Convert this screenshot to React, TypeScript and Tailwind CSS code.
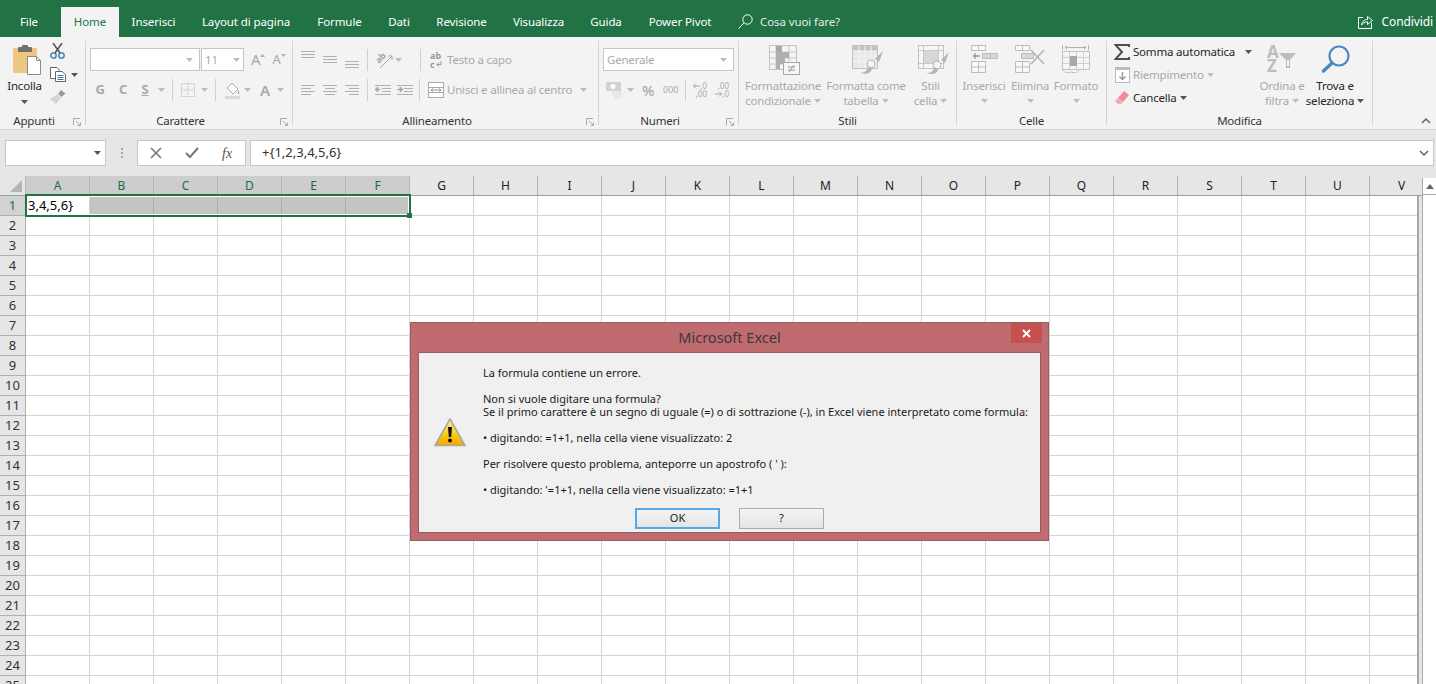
const COLS = "ABCDEFGHIJKLMNOPQRSTUV".split("");
const ROWS = Array.from({ length: 25 }, (_, i) => i + 1);
const TABS = [
  { label: "Inserisci", w: "w-[69px]" },
  { label: "Layout di pagina", w: "w-[116px]" },
  { label: "Formule", w: "w-[71px]" },
  { label: "Dati", w: "w-[48px]" },
  { label: "Revisione", w: "w-[77px]" },
  { label: "Visualizza", w: "w-[77px]" },
  { label: "Guida", w: "w-[58px]" },
  { label: "Power Pivot", w: "w-[90px]" },
];

function Caret({ dark = false, className = "" }: { dark?: boolean; className?: string }) {
  return (
    <svg width="7" height="4" viewBox="0 0 7 4" className={`shrink-0 ${className}`}>
      <polygon points="0,0 7,0 3.5,4" fill={dark ? "#555" : "#bdbdbd"} />
    </svg>
  );
}

function Launcher() {
  return (
    <svg width="8" height="8" viewBox="0 0 8 8" className="absolute right-[4px] top-[5px]">
      <path d="M0.5 7V0.5H7" fill="none" stroke="#a8a8a8" />
      <path d="M3 3L7 7M4.5 7.5H7.5V4.5" fill="none" stroke="#a8a8a8" />
    </svg>
  );
}

function Group({
  w,
  label,
  launcher = false,
  children,
}: {
  w: string;
  label: string;
  launcher?: boolean;
  children: React.ReactNode;
}) {
  return (
    <section className={`${w} shrink-0 flex flex-col h-full`}>
      <div className="h-[76px]">{children}</div>
      <div className={`relative h-[16px] leading-[16px] text-center text-[#333] ${launcher ? "pr-[17px]" : ""}`}>
        {label}
        {launcher && <Launcher />}
      </div>
    </section>
  );
}

function RibbonSep() {
  return <div className="w-px h-[84px] mt-[4px] shrink-0 bg-[#d4d4d4]" />;
}

function RowSep({ className = "" }: { className?: string }) {
  return <div className={`w-px h-[22px] shrink-0 bg-[#d0d0d0] ${className}`} />;
}

function Lines({ ys, xs }: { ys: number[]; xs: [number, number][] }) {
  return (
    <>
      {ys.map((y, i) => (
        <line key={y} x1={xs[i][0]} x2={xs[i][1]} y1={y + 0.5} y2={y + 0.5} stroke="#b0b0b0" />
      ))}
    </>
  );
}

function AlignV({ ys, className = "" }: { ys: number[]; className?: string }) {
  return (
    <svg width="14" height="21" className={`shrink-0 ${className}`}>
      <Lines ys={ys} xs={[[0, 14], [0, 14], [0, 14]]} />
    </svg>
  );
}

function AlignH({ xs, className = "" }: { xs: [number, number][]; className?: string }) {
  return (
    <svg width="14" height="22" className={`shrink-0 ${className}`}>
      <Lines ys={[6, 9, 12, 15]} xs={xs} />
    </svg>
  );
}

function Indent({ flip = false, className = "" }: { flip?: boolean; className?: string }) {
  return (
    <svg width="16" height="22" className={`shrink-0 ${className}`}>
      <Lines ys={[6, 9, 12, 15]} xs={[[0, 16], [7, 16], [7, 16], [0, 16]]} />
      {flip ? (
        <path d="M0 10.5H4M3 8L6 10.5L3 13Z" stroke="#a8a8a8" fill="#a8a8a8" />
      ) : (
        <path d="M2 10.5H6M3 8L0 10.5L3 13Z" stroke="#a8a8a8" fill="#a8a8a8" />
      )}
    </svg>
  );
}

function PasteIcon() {
  return (
    <svg width="28" height="30" viewBox="0 0 28 30" className="block ml-[13px]">
      <rect x="0" y="3" width="24" height="25" rx="1.5" fill="#efc67f" />
      <rect x="5" y="2" width="14" height="5" rx="1" fill="#6f6f6f" />
      <rect x="9" y="0" width="6" height="4" rx="1" fill="#6f6f6f" />
      <path d="M14.5 11.5H23.5L27.5 15.5V29.5H14.5Z" fill="#fff" stroke="#8a8a8a" />
      <path d="M23.5 11.5V15.5H27.5" fill="none" stroke="#8a8a8a" />
    </svg>
  );
}

function ScissorsIcon() {
  return (
    <svg width="15" height="16" viewBox="0 0 15 16" className="block">
      <path d="M3 0L10 10M12 0L5 10" stroke="#555" strokeWidth="1.6" />
      <circle cx="3.5" cy="12.5" r="2.7" fill="none" stroke="#2f75b5" strokeWidth="1.3" />
      <circle cx="11.5" cy="12.5" r="2.7" fill="none" stroke="#2f75b5" strokeWidth="1.3" />
    </svg>
  );
}

function CopyIcon() {
  return (
    <svg width="16" height="15" viewBox="0 0 16 15" className="block">
      <path d="M0.5 0.5H7L9 2.5V11.5H0.5Z" fill="#fff" stroke="#666" />
      <path d="M5.5 4.5H12L15.5 7.5V14.5H5.5Z" fill="#fff" stroke="#666" />
      <path d="M7.5 8.5H13.5M7.5 10.5H13.5M7.5 12.5H13.5" stroke="#2f75b5" />
    </svg>
  );
}

function BrushIcon() {
  return (
    <svg width="16" height="15" viewBox="0 0 16 15" className="block">
      <path d="M11 0L15.5 3.5L11.5 7L8 4Z" fill="#9a9a9a" />
      <path d="M7 4.5L11 8L6 14L0 9Z" fill="#d4d4d4" />
    </svg>
  );
}

function BorderIcon() {
  return (
    <svg width="14" height="14" className="shrink-0 ml-[8px]">
      <rect x="0.5" y="0.5" width="13" height="13" fill="none" stroke="#b5b5b5" strokeDasharray="1 1" />
      <path d="M7 1V13M1 7H13" stroke="#b5b5b5" strokeDasharray="1 1" />
    </svg>
  );
}

function FillIcon() {
  return (
    <svg width="16" height="17" className="shrink-0 ml-[9px]">
      <path d="M7 1L13 7L8 12L2 6Z" fill="#fff" stroke="#a5a5a5" />
      <path d="M13 8C14 10 15 11 14 12C13 12 12.5 10 13 8Z" fill="#a5a5a5" />
      <rect x="0" y="14" width="15" height="3" fill="#d9d9d9" />
    </svg>
  );
}

function OrientationIcon() {
  return (
    <svg width="18" height="18" className="shrink-0 ml-[7px] overflow-visible">
      <path d="M5 17L17 5M17 5H13M17 5V9" fill="none" stroke="#a8a8a8" />
      <text x="1" y="10" fontSize="9" fontWeight="700" fill="#a8a8a8" transform="rotate(-45 6 8)">
        ab
      </text>
    </svg>
  );
}

function MergeIcon() {
  return (
    <svg width="16" height="16" className="shrink-0 ml-[8px]">
      <rect x="0.5" y="0.5" width="15" height="15" fill="#fff" stroke="#b0a8ac" />
      <path d="M1 5.5H15M1 10.5H15" stroke="#b0a8ac" />
      <path d="M3 8H13M3 8L5 6.5M3 8L5 9.5M13 8L11 6.5M13 8L11 9.5" stroke="#999" fill="none" />
    </svg>
  );
}

function MoneyIcon() {
  return (
    <svg width="17" height="17" className="shrink-0 ml-[7px]">
      <rect x="0" y="0" width="15" height="9" fill="#d2d2d2" />
      <circle cx="7" cy="4.5" r="2.5" fill="#fff" />
      <path d="M6 10H16M6 12H16M7 14H15M8 16H14" stroke="#dcdcdc" />
    </svg>
  );
}

function DecimalIcon({ top, bottom, right = false, className = "" }: { top: string; bottom: string; right?: boolean; className?: string }) {
  return (
    <div className={`relative w-[14px] h-[16px] shrink-0 text-[8px] leading-[8px] tracking-normal text-[#a9a9a9] text-right ${className}`}>
      <div>{top}</div>
      <div>{bottom}</div>
      <svg width="7" height="6" className={`absolute left-0 ${right ? "top-[9px]" : "top-[1px]"}`}>
        <path d="M0 3H7M3 0.5L0.5 3L3 5.5" fill="none" stroke="#a9a9a9" transform={right ? "matrix(-1 0 0 1 7 0)" : undefined} />
      </svg>
    </div>
  );
}

function CondFormatIcon() {
  return (
    <svg width="32" height="30" viewBox="0 0 32 30" className="ml-[3px]">
      <rect x="0.5" y="0.5" width="27" height="24" fill="#f7f2f6" stroke="#c2c2c2" />
      <path d="M7 1V24M20 1V24M1 7H27M1 13H27M1 19H27" stroke="#c8c8c8" />
      <rect x="7" y="1" width="6" height="6" fill="#a8a8a8" />
      <rect x="7" y="7" width="13" height="6" fill="#b0b0b0" />
      <rect x="7" y="13" width="9" height="6" fill="#b0b0b0" />
      <rect x="7" y="19" width="4" height="5" fill="#b0b0b0" />
      <rect x="14.5" y="17.5" width="16" height="12" fill="#f6f6f6" stroke="#a8a8a8" />
      <path d="M19 22H26M19 25H26M25 20L20 27" stroke="#999" fill="none" />
    </svg>
  );
}

function TableStyleIcon() {
  return (
    <svg width="32" height="30" viewBox="0 0 32 30" className="ml-[4px]">
      <rect x="0.5" y="0.5" width="25" height="23" fill="#e8e8e8" stroke="#c2c2c2" />
      <rect x="1" y="1" width="24" height="5" fill="#c4c4c4" />
      <path d="M7 1V23M13 1V23M19 1V23M1 6H25M1 11H25M1 16H25" stroke="#f5f5f5" />
      <path d="M31 6L27 17L23 14Z" fill="#b5b5b5" />
      <circle cx="19" cy="19" r="4" fill="#f3f3f3" stroke="#b5b5b5" />
      <path d="M16 21C16 25 13 28 8 28C14 30 20 28 20 23Z" fill="#b5b5b5" />
    </svg>
  );
}

function CellStyleIcon() {
  return (
    <svg width="32" height="30" viewBox="0 0 32 30" className="ml-[6px]">
      <rect x="0.5" y="0.5" width="25" height="23" fill="#f6f6f6" stroke="#c2c2c2" />
      <path d="M1 5.5H25M5.5 1V23M20.5 1V23M1 18.5H25" stroke="#c8c8c8" />
      <rect x="6" y="6" width="14" height="12" fill="#d9d5d9" />
      <path d="M31 7L27 18L23 15Z" fill="#b5b5b5" />
      <circle cx="19" cy="20" r="4" fill="#f3f3f3" stroke="#b5b5b5" />
      <path d="M16 22C16 26 13 28 8 28C14 30 20 29 20 24Z" fill="#b5b5b5" />
    </svg>
  );
}

function InsertCellsIcon() {
  return (
    <svg width="27" height="28" viewBox="0 0 27 28">
      <path d="M0.5 0.5H14.5V5.5H0.5ZM7.5 1V5M0.5 16.5H14.5V27.5H0.5ZM0.5 22H14.5M7.5 17V27" fill="#f8f8f8" stroke="#bcbcbc" />
      <rect x="11.5" y="8.5" width="15" height="5" fill="#d9d5d9" stroke="#bcbcbc" />
      <path d="M19 9V13" stroke="#bcbcbc" />
      <path d="M9 11H3M5 8.5L2.5 11L5 13.5" fill="none" stroke="#9c9c9c" strokeWidth="1.3" />
    </svg>
  );
}

function DeleteCellsIcon() {
  return (
    <svg width="30" height="28" viewBox="0 0 30 28">
      <path d="M0.5 0.5H14.5V5.5H0.5ZM7.5 1V5M0.5 16.5H14.5V27.5H0.5ZM0.5 22H14.5M7.5 17V27" fill="#f8f8f8" stroke="#bcbcbc" />
      <rect x="6.5" y="8.5" width="12" height="5" fill="#d9d5d9" stroke="#bcbcbc" />
      <path d="M16 5L29 19M29 5L16 19" stroke="#b4b4b4" strokeWidth="1.6" />
    </svg>
  );
}

function FormatCellsIcon() {
  return (
    <svg width="28" height="29" viewBox="0 0 28 29">
      <path d="M0.5 0V5M26.5 0V5M3 2.5H24M3 2.5L5 1M3 2.5L5 4M24 2.5L22 1M24 2.5L22 4" fill="none" stroke="#b0b0b0" />
      <rect x="0.5" y="6.5" width="27" height="18" fill="#f8f4f7" stroke="#c2c2c2" />
      <path d="M7.5 7V24M14.5 7V24M21.5 7V24M1 12.5H27M1 18.5H27" stroke="#d0d0d0" />
      <rect x="8" y="11" width="7" height="10" fill="#a8a8a8" />
      <path d="M1 25C2 28 7 28 9 27C11 28 16 28 17 25" fill="none" stroke="#bcbcbc" />
    </svg>
  );
}

function SortFilterIcon() {
  return (
    <svg width="30" height="27" viewBox="0 0 30 27" className="overflow-visible">
      <text x="0" y="13" fontSize="17" fontWeight="700" fill="#bdbdbd" fontFamily="Noto Sans">A</text>
      <text x="0" y="27" fontSize="17" fontWeight="700" fill="#bdbdbd" fontFamily="Noto Sans">Z</text>
      <path d="M12 8H29L23 15V23H19V15Z" fill="#bdbdbd" />
      <path d="M20 15H22V21H20Z" fill="#f3f3f3" />
    </svg>
  );
}

function MagnifierIcon() {
  return (
    <svg width="29" height="28" viewBox="0 0 29 28">
      <circle cx="18" cy="11" r="9.5" fill="none" stroke="#4a86c0" strokeWidth="2.2" />
      <path d="M11 18L2.5 26" stroke="#4a86c0" strokeWidth="3.4" strokeLinecap="round" />
    </svg>
  );
}

function LargeButton({
  w,
  icon,
  line1,
  line2,
  enabled = false,
}: {
  w: string;
  icon: React.ReactNode;
  line1: string;
  line2?: string;
  enabled?: boolean;
}) {
  return (
    <div className={`${w} shrink-0 flex flex-col items-center whitespace-nowrap leading-[15px] ${enabled ? "text-[#262626]" : "text-[#a9a9a9]"}`}>
      <div className="h-[41px] pt-[8px]">{icon}</div>
      <div>{line1}</div>
      <div className="flex items-center gap-[3px] h-[15px]">
        {line2}
        <Caret dark={enabled} />
      </div>
    </div>
  );
}

function Ribbon() {
  return (
    <div className="flex h-[93px] bg-[#f3f3f3] border-b border-[#d2d2d2] text-[11.5px] tracking-[-0.2px]">
      <Group w="w-[85px]" label="Appunti" launcher>
        <div className="flex">
          <div className="w-[49px] pt-[8px]">
            <PasteIcon />
            <div className="mt-[3px] text-center text-[#262626] leading-[16px]">Incolla</div>
            <Caret dark className="block mx-auto mt-[6px]" />
          </div>
          <div className="pt-[6px] ml-[1px]">
            <ScissorsIcon />
            <div className="flex items-center mt-[8px]">
              <CopyIcon />
              <Caret dark className="ml-[5px]" />
            </div>
            <div className="mt-[8px]">
              <BrushIcon />
            </div>
          </div>
        </div>
      </Group>
      <RibbonSep />

      <Group w="w-[206px]" label="Carattere" launcher>
        <div className="pt-[11px]">
          <div className="flex items-center h-[23px] ml-[4px]">
            <div className="w-[110px] h-full flex items-center justify-end pr-[6px] bg-white border border-[#c6c6c6]">
              <Caret />
            </div>
            <div className="w-[43px] ml-[1px] h-full flex items-center justify-between px-[3px] bg-white border border-[#c6c6c6] text-[#a9a9a9]">
              11
              <Caret />
            </div>
            <span className="ml-[7px] text-[15px] text-[#a9a9a9]">A</span>
            <svg width="5" height="3" className="mb-[8px]"><polygon points="0,3 5,3 2.5,0" fill="#b0b0b0" /></svg>
            <span className="ml-[7px] text-[13px] text-[#a9a9a9]">A</span>
            <svg width="5" height="3" className="mb-[8px]"><polygon points="0,0 5,0 2.5,3" fill="#b0b0b0" /></svg>
          </div>
          <div className="flex items-center h-[22px] mt-[8px] text-[#a9a9a9] font-bold text-[13px]">
            <span className="w-[22px] ml-[3px] text-center">G</span>
            <span className="w-[22px] ml-[1px] text-center">C</span>
            <span className="w-[22px] text-center underline">S</span>
            <Caret className="ml-[2px]" />
            <RowSep className="ml-[7px]" />
            <BorderIcon />
            <Caret className="ml-[6px]" />
            <RowSep className="ml-[7px]" />
            <FillIcon />
            <Caret className="ml-[3px]" />
            <span className="ml-[9px] w-[10px] text-[15px] font-semibold">A</span>
            <Caret className="ml-[7px]" />
          </div>
        </div>
      </Group>
      <RibbonSep />

      <Group w="w-[305px]" label="Allineamento" launcher>
        <div className="pt-[12px] text-[#a9a9a9]">
          <div className="flex items-center h-[21px] ml-[8px]">
            <AlignV ys={[2, 5, 8]} />
            <AlignV ys={[7, 10, 13]} className="ml-[8px]" />
            <AlignV ys={[12, 15, 18]} className="ml-[8px]" />
            <RowSep className="ml-[8px]" />
            <OrientationIcon />
            <Caret className="ml-[2px]" />
            <RowSep className="ml-[18px]" />
            <div className="ml-[9px] w-[13px] text-[9px] leading-[9px] tracking-normal font-bold text-[#999]">
              <div>ab</div>
              <div className="flex items-center gap-[1px]">
                c
                <svg width="6" height="6">
                  <path d="M5 0V3.5H1M3 1.5L1 3.5L3 5.5" fill="none" stroke="#999" />
                </svg>
              </div>
            </div>
            <span className="ml-[4px]">Testo a capo</span>
          </div>
          <div className="flex items-center h-[22px] mt-[9px] ml-[8px]">
            <AlignH xs={[[0, 14], [0, 10], [0, 14], [0, 10]]} />
            <AlignH xs={[[0, 14], [2, 12], [0, 14], [2, 12]]} className="ml-[8px]" />
            <AlignH xs={[[0, 14], [4, 14], [0, 14], [4, 14]]} className="ml-[8px]" />
            <RowSep className="ml-[8px]" />
            <Indent className="ml-[7px]" />
            <Indent flip className="ml-[6px]" />
            <RowSep className="ml-[6px]" />
            <MergeIcon />
            <span className="ml-[3px] whitespace-nowrap">Unisci e allinea al centro</span>
            <Caret className="ml-[8px]" />
          </div>
        </div>
      </Group>
      <RibbonSep />

      <Group w="w-[139px]" label="Numeri" launcher>
        <div className="pt-[11px] text-[#a9a9a9]">
          <div className="ml-[4px] w-[131px] h-[23px] flex items-center justify-between pl-[3px] pr-[6px] bg-white border border-[#c6c6c6]">
            Generale
            <Caret />
          </div>
          <div className="flex items-center h-[22px] mt-[8px]">
            <MoneyIcon />
            <Caret className="ml-[4px]" />
            <span className="ml-[8px] w-[13px] text-[15px] text-[#a0a0a0]">%</span>
            <span className="ml-[8px] w-[14px] text-[9px] tracking-normal">000</span>
            <RowSep className="ml-[8px]" />
            <DecimalIcon top=",0" bottom=",00" className="ml-[7px]" />
            <DecimalIcon top=",00" bottom=",0" right className="ml-[8px]" />
          </div>
        </div>
      </Group>
      <RibbonSep />

      <Group w="w-[217px]" label="Stili">
        <div className="flex">
          <LargeButton w="w-[88px]" icon={<CondFormatIcon />} line1="Formattazione" line2="condizionale" />
          <LargeButton w="w-[78px]" icon={<TableStyleIcon />} line1="Formatta come" line2="tabella" />
          <LargeButton w="w-[51px]" icon={<CellStyleIcon />} line1="Stili" line2="cella" />
        </div>
      </Group>
      <RibbonSep />

      <Group w="w-[149px]" label="Celle">
        <div className="flex">
          <LargeButton w="w-[54px]" icon={<InsertCellsIcon />} line1="Inserisci" />
          <LargeButton w="w-[38px]" icon={<DeleteCellsIcon />} line1="Elimina" />
          <LargeButton w="w-[54px]" icon={<FormatCellsIcon />} line1="Formato" />
        </div>
      </Group>
      <RibbonSep />

      <Group w="w-[265px]" label="Modifica">
        <div className="flex">
          <div className="w-[148px] pt-[3px] pl-[7px] whitespace-nowrap">
            <div className="flex items-center h-[23px] text-[#262626]">
              <svg width="16" height="16" className="shrink-0">
                <path d="M15 3V1H1.5L8 8L1.5 15H15V13" fill="none" stroke="#4d4d4d" strokeWidth="2" />
              </svg>
              <span className="ml-[3px]">Somma automatica</span>
              <Caret dark className="ml-[10px]" />
            </div>
            <div className="flex items-center h-[23px] text-[#a9a9a9]">
              <svg width="16" height="16" className="shrink-0 ml-[1px]">
                <rect x="0.5" y="0.5" width="14" height="15" fill="#fff" stroke="#bbb" />
                <rect x="0" y="0" width="15" height="3" fill="#bbb" />
                <path d="M7.5 5V12M4.5 9.5L7.5 12.5L10.5 9.5" fill="none" stroke="#999" strokeWidth="1.4" />
              </svg>
              <span className="ml-[2px]">Riempimento</span>
              <Caret className="ml-[3px]" />
            </div>
            <div className="flex items-center h-[23px] text-[#262626]">
              <svg width="14" height="13" className="shrink-0 ml-[1px]">
                <path d="M9 0L14 4L8 11L3 7Z" fill="#ee8c9c" />
                <path d="M3 7L8 11L6 13H3L0 10Z" fill="#f3a8b4" />
              </svg>
              <span className="ml-[4px]">Cancella</span>
              <Caret dark className="ml-[3px]" />
            </div>
          </div>
          <LargeButton w="w-[54px]" icon={<SortFilterIcon />} line1="Ordina e" line2="filtra" />
          <LargeButton w="w-[52px]" icon={<MagnifierIcon />} line1="Trova e" line2="seleziona" enabled />
        </div>
      </Group>
      <RibbonSep />

      <svg width="10" height="6" className="ml-auto mr-[5px] mb-[5px] self-end">
        <path d="M1 5L5 1L9 5" fill="none" stroke="#666" strokeWidth="1.5" />
      </svg>
    </div>
  );
}

function TitleBar() {
  return (
    <div className="flex h-[37px] bg-[#217346] text-[11.5px] tracking-[-0.1px] text-white">
      <div className="w-[58px] mr-[3px] pt-[6px] flex items-center justify-center">File</div>
      <div className="w-[58px] mt-[7px] flex items-center justify-center bg-[#f3f3f3] text-[#217346]">Home</div>
      {TABS.map((tab) => (
        <div key={tab.label} className={`${tab.w} pt-[6px] flex items-center justify-center`}>
          {tab.label}
        </div>
      ))}
      <div className="flex items-center ml-[13px] pt-[6px]">
        <svg width="15" height="15" viewBox="0 0 15 15">
          <circle cx="9.5" cy="5.5" r="4.7" fill="none" stroke="#fff" />
          <path d="M6 9L0.5 14.5" stroke="#fff" />
        </svg>
        <span className="ml-[7px] text-[#e2ede6]">Cosa vuoi fare?</span>
      </div>
      <div className="flex items-center ml-auto mr-[3px] pt-[6px]">
        <svg width="15" height="14" viewBox="0 0 15 14">
          <path d="M5 2.5H0.5V13.5H13.5V8" fill="none" stroke="#fff" />
          <path d="M3.5 10C4 6 7 4.5 9.5 4.5V1.5L14.5 5.5L9.5 9.5V6.8C7 6.8 5 8 3.5 10Z" fill="none" stroke="#fff" />
        </svg>
        <span className="ml-[8px] text-[12px]">Condividi</span>
      </div>
    </div>
  );
}

function FormulaBar() {
  return (
    <div className="flex h-[46px] pt-[10px] pl-[5px] bg-[#e6e6e6] text-[13px]">
      <div className="w-[101px] h-[26px] flex items-center justify-end pr-[4px] bg-white border border-[#c6c6c6]">
        <Caret dark />
      </div>
      <div className="w-[31px] flex flex-col items-center justify-center gap-[2px] h-[26px]">
        <div className="w-[2px] h-[2px] bg-[#a8a8a8]" />
        <div className="w-[2px] h-[2px] bg-[#a8a8a8]" />
        <div className="w-[2px] h-[2px] bg-[#a8a8a8]" />
      </div>
      <div className="w-[109px] h-[26px] flex items-center bg-white border border-[#c6c6c6]">
        <svg width="12" height="12" className="ml-[12px]">
          <path d="M1 1L11 11M11 1L1 11" stroke="#777" strokeWidth="1.6" />
        </svg>
        <svg width="14" height="12" className="ml-[23px]">
          <path d="M1 6L5 10L13 1" fill="none" stroke="#777" strokeWidth="2" />
        </svg>
        <span className="ml-[23px] italic font-['Liberation_Serif',serif] text-[14px] text-[#555]">fx</span>
      </div>
      <div className="w-[1184px] h-[26px] ml-[4px] flex items-center justify-between pl-[11px] pr-[4px] bg-white border border-[#c6c6c6] text-[#333]">
        +{"{"}1,2,3,4,5,6{"}"}
        <svg width="10" height="6">
          <path d="M1 1L5 5L9 1" fill="none" stroke="#666" strokeWidth="1.5" />
        </svg>
      </div>
    </div>
  );
}

function Sheet() {
  return (
    <div className="relative flex h-[508px] bg-[#e6e6e6] text-[12px]">
      <div className="w-[1422px] overflow-hidden">
        <div className="flex h-[20px] w-[1434px] border-b border-[#a0a0a0]">
          <div className="w-[26px] shrink-0 flex items-end justify-end pr-[3px] pb-[3px] border-r border-[#b5b5b5]">
            <svg width="12" height="12">
              <polygon points="12,0 12,12 0,12" fill="#b4b4b4" />
            </svg>
          </div>
          {COLS.map((c, i) => (
            <div
              key={c}
              className={`w-[64px] shrink-0 flex items-center justify-center border-r border-[#b5b5b5] ${
                i < 6 ? "bg-[#cdcdcd] text-[#1f6b3f]" : "text-[#222]"
              }`}
            >
              {c}
            </div>
          ))}
        </div>
        <div className="w-[1419px] overflow-hidden border-r-2 border-[#a8a8a8] bg-white">
          {ROWS.map((r) => (
            <div key={r} className="flex h-[20px]">
              <div
                className={`w-[26px] shrink-0 flex items-center justify-center pt-[1px] border-r border-b border-[#b0b0b0] text-[13px] ${
                  r === 1 ? "bg-[#d2d2d2] text-[#1f6b3f]" : "bg-[#e6e6e6] text-[#333]"
                }`}
              >
                {r}
              </div>
              {COLS.map((c, i) => (
                <div
                  key={c}
                  className={`w-[64px] shrink-0 border-r border-b border-[#d4d4d4] ${
                    r === 1 && i > 0 && i < 6 ? "bg-[#c4c4c4] border-r-[#aeaeae]" : ""
                  }`}
                />
              ))}
            </div>
          ))}
        </div>
      </div>
      <div className="flex-1 mt-[2px] bg-white border-l border-[#a8a8a8]">
        <div className="h-[17px] flex items-center justify-center border-b border-[#a8a8a8]">
          <svg width="8" height="5">
            <polygon points="0,5 8,5 4,0" fill="#666" />
          </svg>
        </div>
      </div>

      {/* selection outline over row 1 */}
      <div className="absolute left-[25px] top-[18px] w-[386px] h-[23px] border-2 border-[#217346] shadow-[inset_0_0_0_1px_#fff]">
        <div className="w-[62px] h-[19px] flex items-center pl-[1px] bg-white text-[13px] text-black">
          3,4,5,6{"}"}
        </div>
        <div className="absolute -right-[3px] -bottom-[3px] w-[5px] h-[5px] bg-[#217346]" />
      </div>
    </div>
  );
}

function WarningIcon() {
  return (
    <svg width="32" height="29" viewBox="0 0 32 29" className="shrink-0">
      <defs>
        <linearGradient id="warn" x1="0" y1="0" x2="0" y2="1">
          <stop offset="0" stopColor="#fff2a0" />
          <stop offset="0.6" stopColor="#fcc90a" />
          <stop offset="1" stopColor="#f5a800" />
        </linearGradient>
      </defs>
      <path d="M16 1L31 27.5H1Z" fill="url(#warn)" stroke="#a8a8a8" strokeWidth="1.6" strokeLinejoin="round" />
      <path d="M14 9H18L17.2 19H14.8Z" fill="#111" />
      <circle cx="16" cy="22.5" r="2" fill="#111" />
    </svg>
  );
}

function ErrorDialog() {
  return (
    <div className="absolute left-[410px] top-[322px] w-[639px] h-[219px] flex flex-col bg-[#bf6b70] border border-[#8f5f61]">
      <div className="relative h-[29px] flex items-center justify-center text-[14.5px] text-[#3a3a3a]">
        Microsoft Excel
        <div className="absolute right-[6px] top-0 w-[31px] h-[20px] flex items-center justify-center bg-[#c75050]">
          <svg width="9" height="9">
            <path d="M1 1L8 8M8 1L1 8" stroke="#fff" strokeWidth="2" />
          </svg>
        </div>
      </div>
      <div className="flex-1 mx-[7px] mb-[7px] flex flex-col bg-[#f0f0f0] border border-[#8f5f61]">
        <div className="flex flex-1">
          <div className="w-[64px] pl-[15px] pt-[65px]">
            <WarningIcon />
          </div>
          <div className="pt-[13px] text-[11px] leading-[13px] text-[#1a1a1a]">
            <p>La formula contiene un errore.</p>
            <p className="mt-[13px]">Non si vuole digitare una formula?</p>
            <p>Se il primo carattere è un segno di uguale (=) o di sottrazione (-), in Excel viene interpretato come formula:</p>
            <p className="mt-[13px]">• digitando: =1+1, nella cella viene visualizzato: 2</p>
            <p className="mt-[13px]">Per risolvere questo problema, anteporre un apostrofo ( ' ):</p>
            <p className="mt-[13px]">• digitando: '=1+1, nella cella viene visualizzato: =1+1</p>
          </div>
        </div>
        <div className="flex justify-center gap-[19px] pb-[3px] text-[11px] text-[#1a1a1a]">
          <div className="w-[85px] h-[21px] flex items-center justify-center border-2 border-[#5aa7e6] bg-gradient-to-b from-[#f4f4f4] to-[#e4e4e4]">OK</div>
          <div className="w-[85px] h-[21px] flex items-center justify-center border border-[#adadad] bg-gradient-to-b from-[#f4f4f4] to-[#e4e4e4]">?</div>
        </div>
      </div>
    </div>
  );
}

export default function App() {
  return (
    <div className="relative w-[1436px] h-[684px] overflow-hidden bg-white font-['Noto_Sans',sans-serif]">
      <TitleBar />
      <Ribbon />
      <FormulaBar />
      <Sheet />
      <ErrorDialog />
    </div>
  );
}
